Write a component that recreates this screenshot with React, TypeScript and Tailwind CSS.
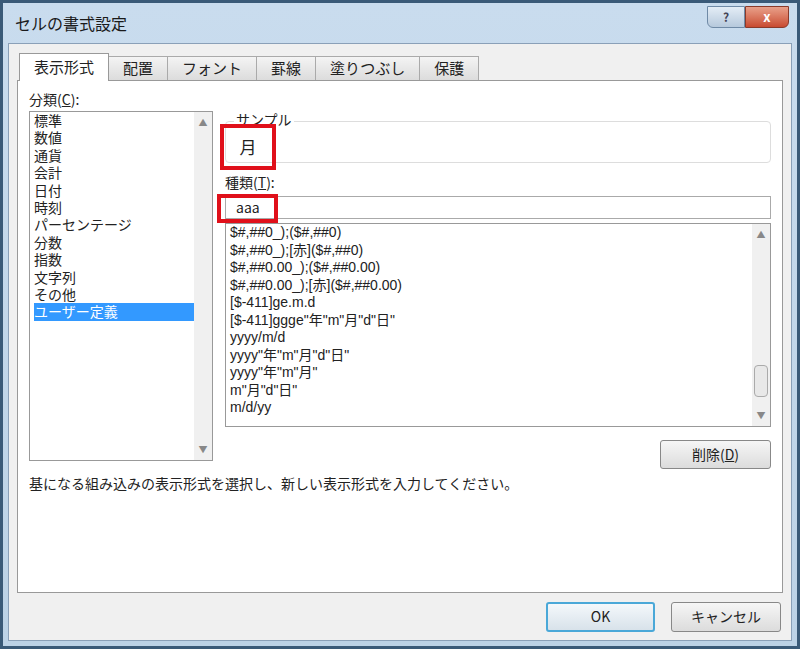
import React from "react";

const font = { fontFamily: '"Noto Sans CJK JP", "Liberation Sans", sans-serif' };

const categories = ["標準", "数値", "通貨", "会計", "日付", "時刻", "パーセンテージ", "分数", "指数", "文字列", "その他", "ユーザー定義"];
const formats = [
  "$#,##0_);($#,##0)",
  "$#,##0_);[赤]($#,##0)",
  "$#,##0.00_);($#,##0.00)",
  "$#,##0.00_);[赤]($#,##0.00)",
  "[$-411]ge.m.d",
  "[$-411]ggge\"年\"m\"月\"d\"日\"",
  "yyyy/m/d",
  "yyyy\"年\"m\"月\"d\"日\"",
  "yyyy\"年\"m\"月\"",
  "m\"月\"d\"日\"",
  "m/d/yy",
];
const tabs = ["表示形式", "配置", "フォント", "罫線", "塗りつぶし", "保護"];

function ScrollBar({ thumb }: { thumb?: boolean }) {
  return (
    <div className="flex w-[18px] flex-col items-center justify-between bg-[#f0f0f0] py-1 text-[9px] text-[#888]">
      <span>▲</span>
      {thumb && <div className="mt-auto mb-3 h-[32px] w-[14px] rounded-sm border border-[#aaa] bg-[#e8e8e8]" />}
      <span>▼</span>
    </div>
  );
}

export default function App() {
  return (
    <div style={font} className="h-[649px] w-[800px] overflow-hidden bg-[#bfd3e6] text-[14px] text-[#222]">
      <div className="flex h-[649px] flex-col border-[3px] border-[#3a5a78] bg-gradient-to-b from-[#c9dcee] to-[#bcd2e6]">
        {/* title bar */}
        <div className="flex h-[40px] items-center justify-between pl-3 pr-2">
          <span className="text-[16px] text-[#1a1a1a]">セルの書式設定</span>
          <div className="flex -mt-3">
            <div className="flex h-[22px] w-[38px] items-center justify-center rounded-bl-md border border-[#6f8aa6] bg-gradient-to-b from-[#e4edf6] to-[#b6c9dc] text-[12px] font-bold text-[#445]">?</div>
            <div className="flex h-[22px] w-[44px] items-center justify-center rounded-br-md border border-[#8a3a2a] bg-gradient-to-b from-[#e8a08a] to-[#c84a30] text-[13px] font-bold text-white">x</div>
          </div>
        </div>
        {/* client area */}
        <div className="flex flex-1 flex-col bg-[#f0f0f0] mx-[5px] mb-[5px] border border-[#8aa0b8] px-[8px] pt-[8px]">
          <div className="flex h-[28px] items-end pl-[2px]">
            {tabs.map((t, i) => (
              <div
                key={t}
                className={
                  i === 0
                    ? "relative z-10 -mb-px flex h-[28px] items-center border border-b-0 border-[#999] bg-white px-[14px] text-[15px]"
                    : "flex h-[24px] items-center border border-l-0 border-b-0 border-[#aaa] bg-gradient-to-b from-[#f4f4f4] to-[#dcdcdc] px-[14px] text-[15px]"
                }
              >
                {t}
              </div>
            ))}
          </div>
          <div className="flex h-[513px] flex-col border border-[#999] bg-white px-[11px] pt-[10px]">
            <div className="flex gap-[12px]">
              <div className="flex flex-col">
                <span className="text-[14px] leading-[16px]">分類(<u>C</u>):</span>
                <div className="mt-[4px] flex h-[350px] w-[184px] border border-[#999]">
                  <div className="flex-1 pl-[4px] text-[14px] leading-[17.4px]">
                    {categories.map((c, i) => (
                      <div key={c} className={i === 11 ? "bg-[#3399ff] text-white" : ""}>{c}</div>
                    ))}
                  </div>
                  <ScrollBar />
                </div>
              </div>
              <div className="flex flex-1 flex-col pt-[30px]">
                <div className="relative h-[42px] rounded border border-[#ddd]">
                  <span className="absolute -top-[11px] left-[8px] bg-white px-[2px] text-[14px] leading-[16px]">サンプル</span>
                  <div className="absolute -left-[6px] top-[2px] flex h-[46px] w-[56px] items-center justify-center border-[4px] border-[#e0101a] text-[17px]">月</div>
                </div>
                <span className="mt-[11px] text-[14px] leading-[16px]">種類(<u>T</u>):</span>
                <div className="relative mt-[6px] flex h-[23px] items-center border border-[#aaa] pl-[10px] text-[14px]">
                  aaa
                  <div className="absolute -left-[9px] -top-[3px] h-[29px] w-[61px] border-[4px] border-[#e0101a]" />
                </div>
                <div className="mt-[4px] flex h-[204px] border border-[#999]">
                  <div className="flex-1 overflow-hidden pl-[4px] text-[14px] leading-[17.5px]" style={{ fontFamily: '"Liberation Sans", "Noto Sans CJK JP", sans-serif' }}>
                    {formats.map((f) => (
                      <div key={f} className="whitespace-pre">{f}</div>
                    ))}
                  </div>
                  <ScrollBar thumb />
                </div>
                <div className="mt-[13px] flex justify-end">
                  <button className="h-[29px] w-[111px] rounded-[3px] border border-[#888] bg-gradient-to-b from-[#f6f6f6] to-[#dcdcdc] text-[14px]">削除(<u>D</u>)</button>
                </div>
              </div>
            </div>
            <p className="mt-[4px] text-[14px]">基になる組み込みの表示形式を選択し、新しい表示形式を入力してください。</p>
          </div>
          <div className="flex flex-1 items-center justify-end gap-[16px] pr-[2px]">
            <button className="h-[30px] w-[109px] rounded-[3px] border-2 border-[#4aa8d8] bg-gradient-to-b from-[#f4f8fb] to-[#d8e2ea] text-[14px]">OK</button>
            <button className="h-[30px] w-[110px] rounded-[3px] border border-[#888] bg-gradient-to-b from-[#f6f6f6] to-[#dcdcdc] text-[14px]">キャンセル</button>
          </div>
        </div>
      </div>
    </div>
  );
}
